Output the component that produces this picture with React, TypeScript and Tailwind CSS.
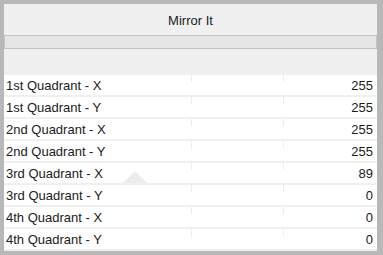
import React from "react";

const rows: [string, string][] = [
  ["1st Quadrant - X", "255"],
  ["1st Quadrant - Y", "255"],
  ["2nd Quadrant - X", "255"],
  ["2nd Quadrant - Y", "255"],
  ["3rd Quadrant - X", "89"],
  ["3rd Quadrant - Y", "0"],
  ["4th Quadrant - X", "0"],
  ["4th Quadrant - Y", "0"],
];

export default function App() {
  return (
    <div
      className="w-[383px] h-[255px] bg-[#b8b8b8] pt-[4px] pl-[4px] pr-[6px] pb-[4px] text-[13px] text-[#1a1a1a]"
      style={{ fontFamily: '"Liberation Sans", Arial, sans-serif' }}
    >
      <div className="h-full bg-[#f0f0f0] flex flex-col">
        <div className="h-[31px] flex items-center justify-center leading-none pt-[2px]">
          Mirror It
        </div>
        <div className="h-[14px] border border-[#c4c4c4] bg-[#e6e6e6]" />
        <div className="h-[26px]" />
        <div className="flex flex-col gap-[2px]">
          {rows.map(([label, value], i) => (
            <div key={i} className="relative h-[20px] bg-white flex items-center leading-none">
              <div className="w-[187px] pl-[2px]">{label}</div>
              <div className="w-[92px] h-full relative">
                <div className="absolute left-0 top-0 w-px h-[7px] bg-[#ececec]" />
              </div>
              <div className="flex-1 h-full relative flex items-center justify-end pr-[4px]">
                <div className="absolute left-0 top-0 w-px h-[7px] bg-[#ececec]" />
                {value}
              </div>
              {i === 4 && (
                <svg
                  className="absolute left-[119px] top-[8px]"
                  width="24"
                  height="12"
                  viewBox="0 0 24 12"
                >
                  <polygon points="12,0 24,12 0,12" fill="#ececec" />
                </svg>
              )}
            </div>
          ))}
        </div>
      </div>
    </div>
  );
}
